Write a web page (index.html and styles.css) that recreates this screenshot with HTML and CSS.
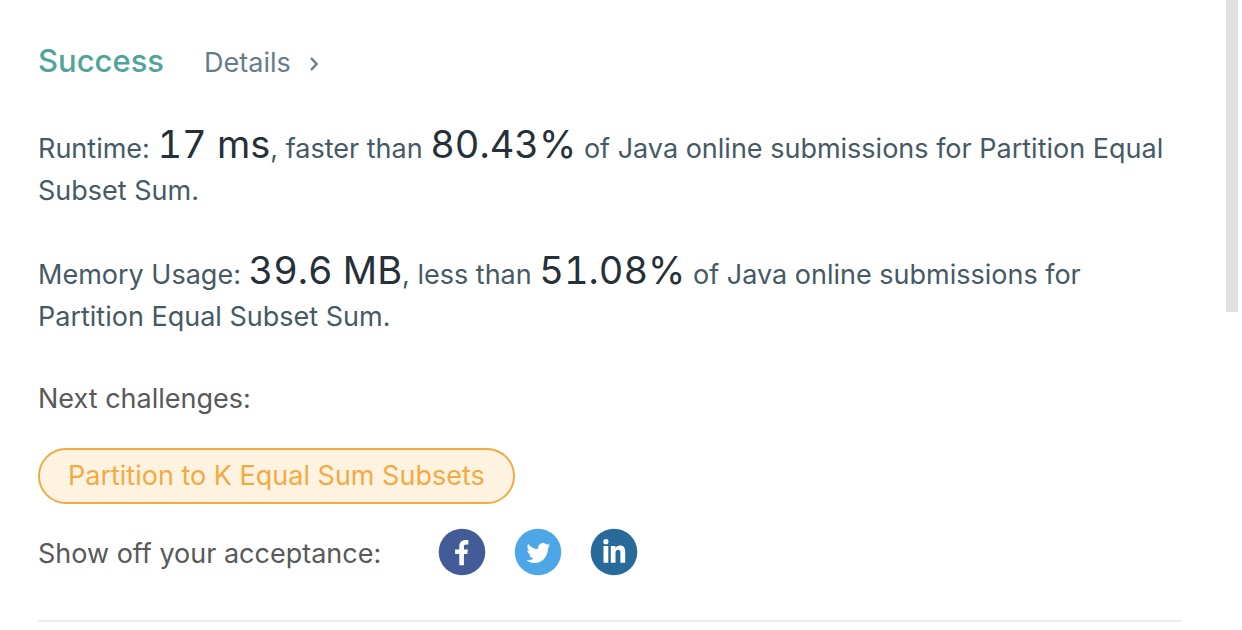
FILE: index.html
```html
<!DOCTYPE html>
<html lang="en">
<head>
<meta charset="utf-8">
<title>Submission result</title>
<link rel="stylesheet" href="styles.css">
</head>
<body>
<div class="panel">
<main class="result">
  <header class="status">
    <h1 class="status-title">Success</h1>
    <a class="details" href="#details">Details
      <svg class="chevron" viewBox="0 0 10 16" aria-hidden="true"><path d="M2 3l5.6 6L2 15"/></svg>
    </a>
  </header>
  <p class="metric">Runtime: <span class="value">17 ms</span>, faster than <span class="value">80.43%</span> of Java online submissions for Partition Equal Subset Sum.</p>
  <p class="metric">Memory Usage: <span class="value">39.6 MB</span>, less than <span class="value">51.08%</span> of Java online submissions for Partition Equal Subset Sum.</p>
  <h2 class="label next">Next challenges:</h2>
  <a class="challenge" href="#challenge">Partition to K Equal Sum Subsets</a>
  <div class="share">
    <span class="label share-label">Show off your acceptance:</span>
    <nav class="socials" aria-label="Share">
      <a href="#facebook" aria-label="Facebook"><svg class="social" viewBox="0 0 48 48"><circle cx="24" cy="24" r="23.3" fill="#435b96"/><path fill="#fff" d="M21.3 37.2V25.9h-4.2v-4.5h4.2v-3c0-4.3 2.4-6.5 6.2-6.5 1.2 0 2.2.1 2.8.2v4.4h-2.2c-1.7 0-2.2.9-2.2 2.3v2.6h4l-.6 4.5h-3.4v11.3z"/></svg></a>
      <a href="#twitter" aria-label="Twitter"><svg class="social" viewBox="0 0 64 64"><circle cx="32" cy="32" r="31" fill="#4da7e7"/><path fill="#fff" transform="translate(0 1)" d="M48.5 22.1c-1.2.5-2.4.9-3.8 1 1.4-.8 2.4-2.1 2.9-3.6-1.3.8-2.7 1.3-4.2 1.6-1.2-1.3-2.9-2.1-4.7-2.1-3.6 0-6.6 2.9-6.6 6.6 0 .5.1 1 .2 1.5-5.5-.3-10.3-2.9-13.5-6.9-.6 1-.9 2.1-.9 3.3 0 2.3 1.2 4.3 2.9 5.5-1.1 0-2.1-.3-3-.8v.1c0 3.2 2.3 5.8 5.3 6.4-.6.1-1.1.2-1.7.2-.4 0-.8 0-1.2-.1.8 2.6 3.3 4.5 6.1 4.6-2.2 1.8-5.1 2.8-8.2 2.8-.5 0-1.1 0-1.6-.1 2.9 2.4 6.4 3.6 10.7 3.6 12.1 0 18.1-10.7 18.1-19.4v-.8c1.3-1 2.4-2.1 3.2-3.4z"/></svg></a>
      <a href="#linkedin" aria-label="LinkedIn"><svg class="social" viewBox="0 0 48 48"><circle cx="24" cy="24" r="23.3" fill="#286a99"/><g fill="#fff"><circle cx="15.9" cy="13.7" r="2.6"/><path d="M13.5 18h4.8v16.7h-4.8zM20.8 18h4.6v2.1c.9-1.5 2.5-2.6 4.7-2.6 3.8 0 5.1 2.6 5.1 6.5v10.7h-4.8V25c0-2-.4-3.3-2.2-3.3-1.9 0-2.7 1.4-2.7 3.4v9.6h-4.7z"/></g></svg></a>
    </nav>
  </div>
  <hr class="divider">
</main>
<div class="scroll-track" aria-hidden="true"><div class="scroll-thumb"></div></div>
</div>
</body>
</html>
```
FILE: styles.css
```css
body {
  margin: 0;
  background: #fff;
  font-family: Inter, "Liberation Sans", sans-serif;
  font-size: 27px;
  line-height: 42px;
  color: #455a64;
}

a {
  text-decoration: none;
}

.panel {
  display: flex;
  min-height: 100vh;
}

.result {
  flex: 1;
  min-width: 0;
  padding: 40px 44px 0 38px;
}

.status {
  display: flex;
  align-items: baseline;
  gap: 40px;
  margin-bottom: 44px;
}

.status-title {
  margin: 0;
  font-size: 31px;
  font-weight: 500;
  color: #4fa59a;
}

.details {
  display: flex;
  align-items: center;
  gap: 18px;
  color: #667d89;
}

.chevron {
  width: 10px;
  height: 16px;
  fill: none;
  stroke: #667d89;
  stroke-width: 2.4;
}

.metric {
  margin: 0 0 42px;
}

.value {
  font-size: 38px;
  line-height: 32px;
  font-variant-numeric: tabular-nums;
  color: #263038;
}

.label {
  margin: 0;
  font-size: 27px;
  font-weight: 400;
  color: #595959;
}

.metric:last-of-type {
  margin-bottom: 40px;
}

.next {
  margin-bottom: 28px;
}

.challenge {
  display: block;
  width: fit-content;
  padding: 5px 28px;
  border: 2px solid #f3aa42;
  border-radius: 28px;
  background: #fef3e1;
  color: #f3aa42;
}

.share {
  display: flex;
  align-items: center;
  gap: 57px;
  margin-top: 24px;
}

.share-label {
  padding-top: 4px;
}

.socials {
  display: flex;
  gap: 28px;
}

.social {
  display: block;
  width: 48px;
  height: 48px;
}

.divider {
  margin: 44px 0 0;
  border: 0;
  border-top: 2px solid #eee;
}

.scroll-track {
  width: 16px;
}

.scroll-thumb {
  width: 12px;
  height: 312px;
  background: #e1e1e1;
}
```
